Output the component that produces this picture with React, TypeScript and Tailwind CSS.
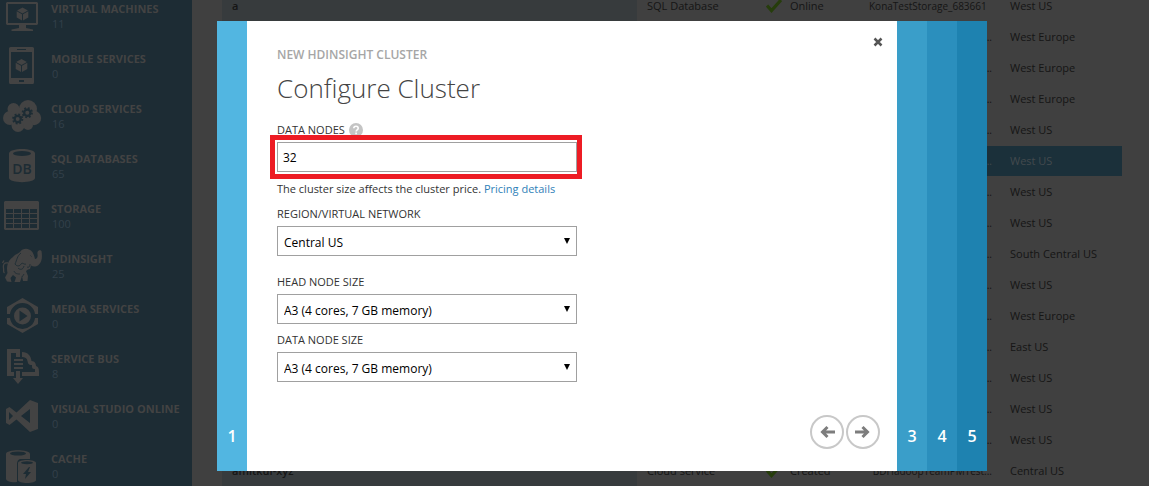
import type { ReactNode } from "react";

const BAR = "#1d2c34";

function Cube({ x, y }: { x: number; y: number }) {
  return (
    <g transform={`translate(${x} ${y})`}>
      <path d="M0 -6.5 5.4 -3.6 0 -.6 -5.4 -3.6Z" />
      <path d="M-5.8 -2.7 -.5 .2V6.4L-5.8 3.4Z" />
      <path d="M5.8 -2.7 .5 .2V6.4L5.8 3.4Z" />
    </g>
  );
}

function Gear({ x, y }: { x: number; y: number }) {
  return (
    <g transform={`translate(${x} ${y})`} fill="none" stroke={BAR}>
      <circle r="3.1" strokeWidth="2.2" />
      <circle r="4.7" strokeWidth="1.8" strokeDasharray="1.85 1.84" />
    </g>
  );
}

const icons: Record<string, ReactNode> = {
  vm: (
    <>
      <path fillRule="evenodd" d="M5 6H35L36 7V28L35 29H5L4 28V7ZM6 8V27H34V8Z" />
      <path d="M17 29H24V32L31 33.500V35H9.500V33.500L17 32Z" />
      <Cube x={20.5} y={18} />
    </>
  ),
  mobile: (
    <>
      <path fillRule="evenodd" d="M8.500 1H30.500Q32 1 32 2.500V36.500Q32 38 30.500 38H8.500Q7 38 7 36.500V2.500Q7 1 8.500 1ZM9 6V32H30V6ZM15 3V4H24V3ZM17 34V36H22V34Z" />
      <Cube x={19.5} y={19.5} />
    </>
  ),
  cloud: (
    <>
      <circle cx="26" cy="13" r="9" />
      <circle cx="11.500" cy="13" r="6" />
      <circle cx="8" cy="22" r="7" />
      <circle cx="32" cy="22" r="7.200" />
      <circle cx="16" cy="29.500" r="6.500" />
      <circle cx="26" cy="29" r="5" />
      <path d="M10 12H28V28H10Z" />
      <Gear x={15.7} y={23} />
      <Gear x={25.3} y={16.7} />
    </>
  ),
  db: (
    <>
      <path d="M7 7.500C7 1.500 33 1.500 33 7.500V32C33 37.500 7 37.500 7 32Z" />
      <ellipse cx="20" cy="7.500" rx="9" ry="2.400" fill={BAR} />
      <text x="20" y="28" textAnchor="middle" fontSize="14" fontWeight="600" fill={BAR}>DB</text>
    </>
  ),
  storage: (
    <path
      fillRule="evenodd"
      d="M3 5H36L37 6V33L36 34H3L2 33V6ZM4 13V17H11V13ZM12 13V17H19V13ZM20 13V17H27V13ZM28 13V17H35V13ZM4 18V22H11V18ZM12 18V22H19V18ZM20 18V22H27V18ZM28 18V22H35V18ZM4 23V27H11V23ZM12 23V27H19V23ZM20 23V27H27V23ZM28 23V27H35V23ZM4 28V32H11V28ZM12 28V32H19V28ZM20 28V32H27V28ZM28 28V32H35V28Z"
    />
  ),
  elephant: (
    <>
      <path d="M11 11C13 8 16 8 18 6C20 3 24 2 27 3.500C31 5 32 9 33 13C35 13 36 11 35.500 8C35 6 36 4.500 38 4L39.500 5C40.500 11 40 16 36.500 19C34 21 31 21 29 19.500L28 23L26 23.500L24 25L26 30L25.500 35H21L20 30L18 36H12.500L14 31.500L11 29L8.500 32L9.500 36L5 35.500L3 31.500L5.500 27C4 21 6 14 11 11Z" />
      <path d="M6 17C2 16 1 19 1.500 22C2 25 1 26 2.500 27M2 14.500 .5 17" fill="none" stroke="#434343" strokeWidth="1.3" />
      <path d="M19 7C15 10 15 14 13 18C15 21 18 20 19 18C21 16 22 19 24 18M22 20C21 24 18 24 16 22M28.500 9.500 29.500 10.500M25 21C27 22 28 20 28 18" stroke={BAR} fill="none" strokeWidth=".9" />
      <path d="M12 25C13 28 16 28 18 28M22 28L20 31" stroke={BAR} fill="none" strokeWidth=".8" />
    </>
  ),
  media: (
    <>
      <path d="M20.500 2 36 11V18H33A12.600 12.600 0 0 0 8 18H5V11Z" />
      <path d="M20.500 37 36 28V22H33A12.600 12.600 0 0 1 8 22H5V28Z" />
      <path fillRule="evenodd" d="M20.500 11.500A8.500 8.500 0 1 0 20.500 28.500A8.500 8.500 0 1 0 20.500 11.500ZM17.500 14.500 25.500 20 17.500 25.500Z" />
    </>
  ),
  bus: (
    <>
      <path d="M5 3H18V11H14V7H9V26H12V30H5Z" />
      <path d="M20 6C26 6 29 10 29.500 15C33 15 34 18 34 20C37 21 37 24 37 26V30H20V26H33V23C30 23 30 22 30 19C26 19 26 17 25.500 15C25 12 23 11 20 11Z" />
      <path d="M12 13H21V15H12ZM12 17H21V19H12ZM12 21H21V23H12ZM14 25H18V32H21L16 38L11 32H14Z" />
    </>
  ),
  vs: (
    <path
      fillRule="evenodd"
      d="M28 4 36 7V33L28 36 14.500 23.500 7.500 29 4 27V13L7.500 11 14.500 16.500ZM28 13 19 20 28 27ZM7 16V24L11 20Z"
    />
  ),
  cache: (
    <>
      <path d="M4 8C4 3 28 3 28 8V13H18Q15 14 15 18V36C10 37 4 35 4 33Z" />
      <ellipse cx="16" cy="7.500" rx="8" ry="2" fill={BAR} />
      <path d="M16 17C16 13 34 13 34 17V34C34 38 16 38 16 34Z" />
      <ellipse cx="25" cy="16.800" rx="6" ry="1.500" fill={BAR} />
      <path d="M27 21 21 28H24L23 33 29 26H26L28 21Z" fill={BAR} />
    </>
  ),
};

const services = [
  { icon: "vm", name: "VIRTUAL MACHINES", count: 11 },
  { icon: "mobile", name: "MOBILE SERVICES", count: 0 },
  { icon: "cloud", name: "CLOUD SERVICES", count: 16 },
  { icon: "db", name: "SQL DATABASES", count: 65 },
  { icon: "storage", name: "STORAGE", count: 100 },
  { icon: "elephant", name: "HDINSIGHT", count: 25 },
  { icon: "media", name: "MEDIA SERVICES", count: 0 },
  { icon: "bus", name: "SERVICE BUS", count: 8 },
  { icon: "vs", name: "VISUAL STUDIO ONLINE", count: 0 },
  { icon: "cache", name: "CACHE", count: 0 },
];

type Row = { name?: string; type?: string; status?: string; sub?: string; location: string; selected?: boolean };

const rows: Row[] = [
  { name: "a", type: "SQL Database", status: "Online", sub: "KonaTestStorage_683661", location: "West US" },
  { location: "West Europe" },
  { location: "West Europe" },
  { location: "West Europe" },
  { location: "West US" },
  { location: "West US", selected: true },
  { location: "West US" },
  { location: "West US" },
  { location: "South Central US" },
  { location: "West US" },
  { location: "West Europe" },
  { location: "East US" },
  { location: "West US" },
  { location: "West US" },
  { location: "West US" },
  { name: "amitkul-xyz", type: "Cloud service", status: "Created", location: "Central US" },
];

function Sidebar() {
  return (
    <nav className="w-48 shrink-0 bg-[#1d2c34]">
      <ul className="-mt-[9px]">
        {services.map((s) => (
          <li key={s.name}>
            <a href="#" className="flex h-[50px] items-center gap-[9px] pl-[2px]">
              <svg viewBox="0 0 40 40" className="size-10 shrink-0 fill-[#434343]" aria-hidden="true">
                {icons[s.icon]}
              </svg>
              <span className="flex flex-col leading-[15px]">
                <span className="text-[11px] font-bold text-[#434343]">{s.name}</span>
                <span className="pl-[1px] text-[11px] text-[#33404a]">{s.count}</span>
              </span>
            </a>
          </li>
        ))}
      </ul>
    </nav>
  );
}

function Resources() {
  return (
    <main className="min-w-0 flex-1 pr-[27px] pl-[30px]">
      <table className="-mt-[10px] w-full table-fixed border-separate border-spacing-x-0 border-spacing-y-px text-[11px] text-[#151515]">
        <colgroup>
          <col />
          <col className="w-[120px]" />
          <col className="w-[102px]" />
          <col className="w-[141px]" />
          <col className="w-[122px]" />
        </colgroup>
        <tbody>
          {rows.map((r, i) => (
            <tr key={i} className={r.selected ? "h-[30px] bg-[#1b303a] text-[#434a4e]" : "h-[30px]"}>
              <td className={r.selected ? "" : "bg-[#373b3d] pl-[10px] font-semibold"}>{r.name}</td>
              <td className="pl-[10px]">{r.type}</td>
              <td className="pl-[9px]">
                {r.status && (
                  <span className="flex items-center gap-2">
                    <svg viewBox="0 0 16 14" className="h-[14px] w-4" aria-hidden="true">
                      <path d="M1 6.500 5.500 11.500 15 1" fill="none" stroke="#263d0c" strokeWidth="3.200" />
                    </svg>
                    {r.status}
                  </span>
                )}
              </td>
              <td className={r.sub ? "pl-[10px] text-[10px] whitespace-nowrap" : "pr-2 text-right text-[10px] whitespace-nowrap"}>
                {r.sub ?? "BDHadoopTeamPMTest..."}
              </td>
              <td className="pl-[10px] whitespace-nowrap">{r.location}</td>
            </tr>
          ))}
        </tbody>
      </table>
    </main>
  );
}

function SizeSelect({ id, label, value }: { id: string; label: string; value: string }) {
  return (
    <div>
      <label htmlFor={id} className="block text-[11px] leading-6 text-[#333]">
        {label}
      </label>
      <div className="relative">
        <select
          id={id}
          defaultValue={value}
          className="block h-[30px] w-full appearance-none border border-[#a0a0a0] bg-white pt-[3px] pl-[6px] text-xs text-black"
        >
          <option>{value}</option>
        </select>
        <svg viewBox="0 0 6 6" className="pointer-events-none absolute top-3 right-[7px] size-[6px]" aria-hidden="true">
          <path d="M0 0H6L3 6Z" />
        </svg>
      </div>
    </div>
  );
}

function NavButton({ label, flip }: { label: string; flip?: boolean }) {
  return (
    <button type="button" aria-label={label} className="size-[34px] rounded-full border-2 border-[#c8c8c8]">
      <svg viewBox="0 0 30 30" className={flip ? "size-[30px] rotate-180" : "size-[30px]"} aria-hidden="true">
        <path d="M23 15H10M15.500 10 10.500 15 15.500 20" fill="none" stroke="#7d7d7d" strokeWidth="3" />
      </svg>
    </button>
  );
}

function Wizard() {
  return (
    <div className="absolute inset-0 flex items-start justify-center pt-[21px] pl-[55px]">
      <section role="dialog" aria-label="Configure Cluster" className="flex min-h-[450px] w-[770px] bg-white">
        <button type="button" className="flex w-[30px] items-end justify-center bg-[#52b6e1] pb-[23px] text-base font-semibold text-white">
          1
        </button>
        <form className="flex flex-1 flex-col pr-[17px] pb-[22px] pl-[30px]">
          <header className="flex items-start justify-between">
            <div>
              <p className="pt-6 text-xs leading-5 font-semibold text-[#a6a6a6]">NEW HDINSIGHT CLUSTER</p>
              <h1 className="pt-[3px] text-[26px] leading-10 font-light text-[#444]">Configure Cluster</h1>
            </div>
            <button type="button" aria-label="Close" className="mt-4 -mr-[3px]">
              <svg viewBox="0 0 10 10" className="size-[10px]" aria-hidden="true">
                <path d="M1.500 1.500 8.500 8.500M8.500 1.500 1.500 8.500" stroke="#555" strokeWidth="2.500" />
              </svg>
            </button>
          </header>
          <div className="w-[300px] pt-[10px]">
            <div className="flex items-center gap-1 leading-6">
              <label htmlFor="nodes" className="text-[11px] text-[#333]">DATA NODES</label>
              <svg viewBox="0 0 14 14" className="size-[14px]" aria-hidden="true">
                <circle cx="7" cy="7" r="7" fill="#c4c4c4" />
                <path d="M4.800 5.300C4.800 2.500 9.200 2.500 9.200 5.200C9.200 6.800 7.100 6.800 7.100 8.500M7.100 9.600V11.300" fill="none" stroke="#fff" strokeWidth="1.600" />
              </svg>
            </div>
            <div className="relative">
              <input id="nodes" defaultValue="32" className="block h-[30px] w-full border border-[#a0a0a0] px-[5px] text-xs text-black" />
              <div className="pointer-events-none absolute -top-[7px] -right-[5px] -bottom-[7px] -left-[7px] border-5 border-[#ed1c24]" />
            </div>
            <p className="pt-[5px] pb-px text-[11px] leading-6 whitespace-nowrap text-[#333]">
              The cluster size affects the cluster price.{" "}
              <a href="#" className="text-[#2f7fb8]">Pricing details</a>
            </p>
            <SizeSelect id="region" label="REGION/VIRTUAL NETWORK" value="Central US" />
            <div className="flex flex-col gap-1 pt-[14px]">
              <SizeSelect id="head" label="HEAD NODE SIZE" value="A3 (4 cores, 7 GB memory)" />
              <SizeSelect id="data" label="DATA NODE SIZE" value="A3 (4 cores, 7 GB memory)" />
            </div>
          </div>
          <footer className="mt-auto flex justify-end gap-[2px]">
            <NavButton label="Previous" />
            <NavButton label="Next" flip />
          </footer>
        </form>
        <button type="button" className="flex w-[30px] items-end justify-center bg-[#3a9ec9] pb-[23px] text-base font-semibold text-white">
          3
        </button>
        <button type="button" className="flex w-[30px] items-end justify-center bg-[#2b8fbd] pb-[23px] text-base font-semibold text-white">
          4
        </button>
        <button type="button" className="flex w-[30px] items-end justify-center bg-[#1e82b0] pb-[23px] text-base font-semibold text-white">
          5
        </button>
      </section>
    </div>
  );
}

export default function App() {
  return (
    <div className="relative flex h-screen overflow-hidden bg-[#404040] font-['Open_Sans','Noto_Sans',sans-serif]">
      <Sidebar />
      <Resources />
      <Wizard />
    </div>
  );
}
